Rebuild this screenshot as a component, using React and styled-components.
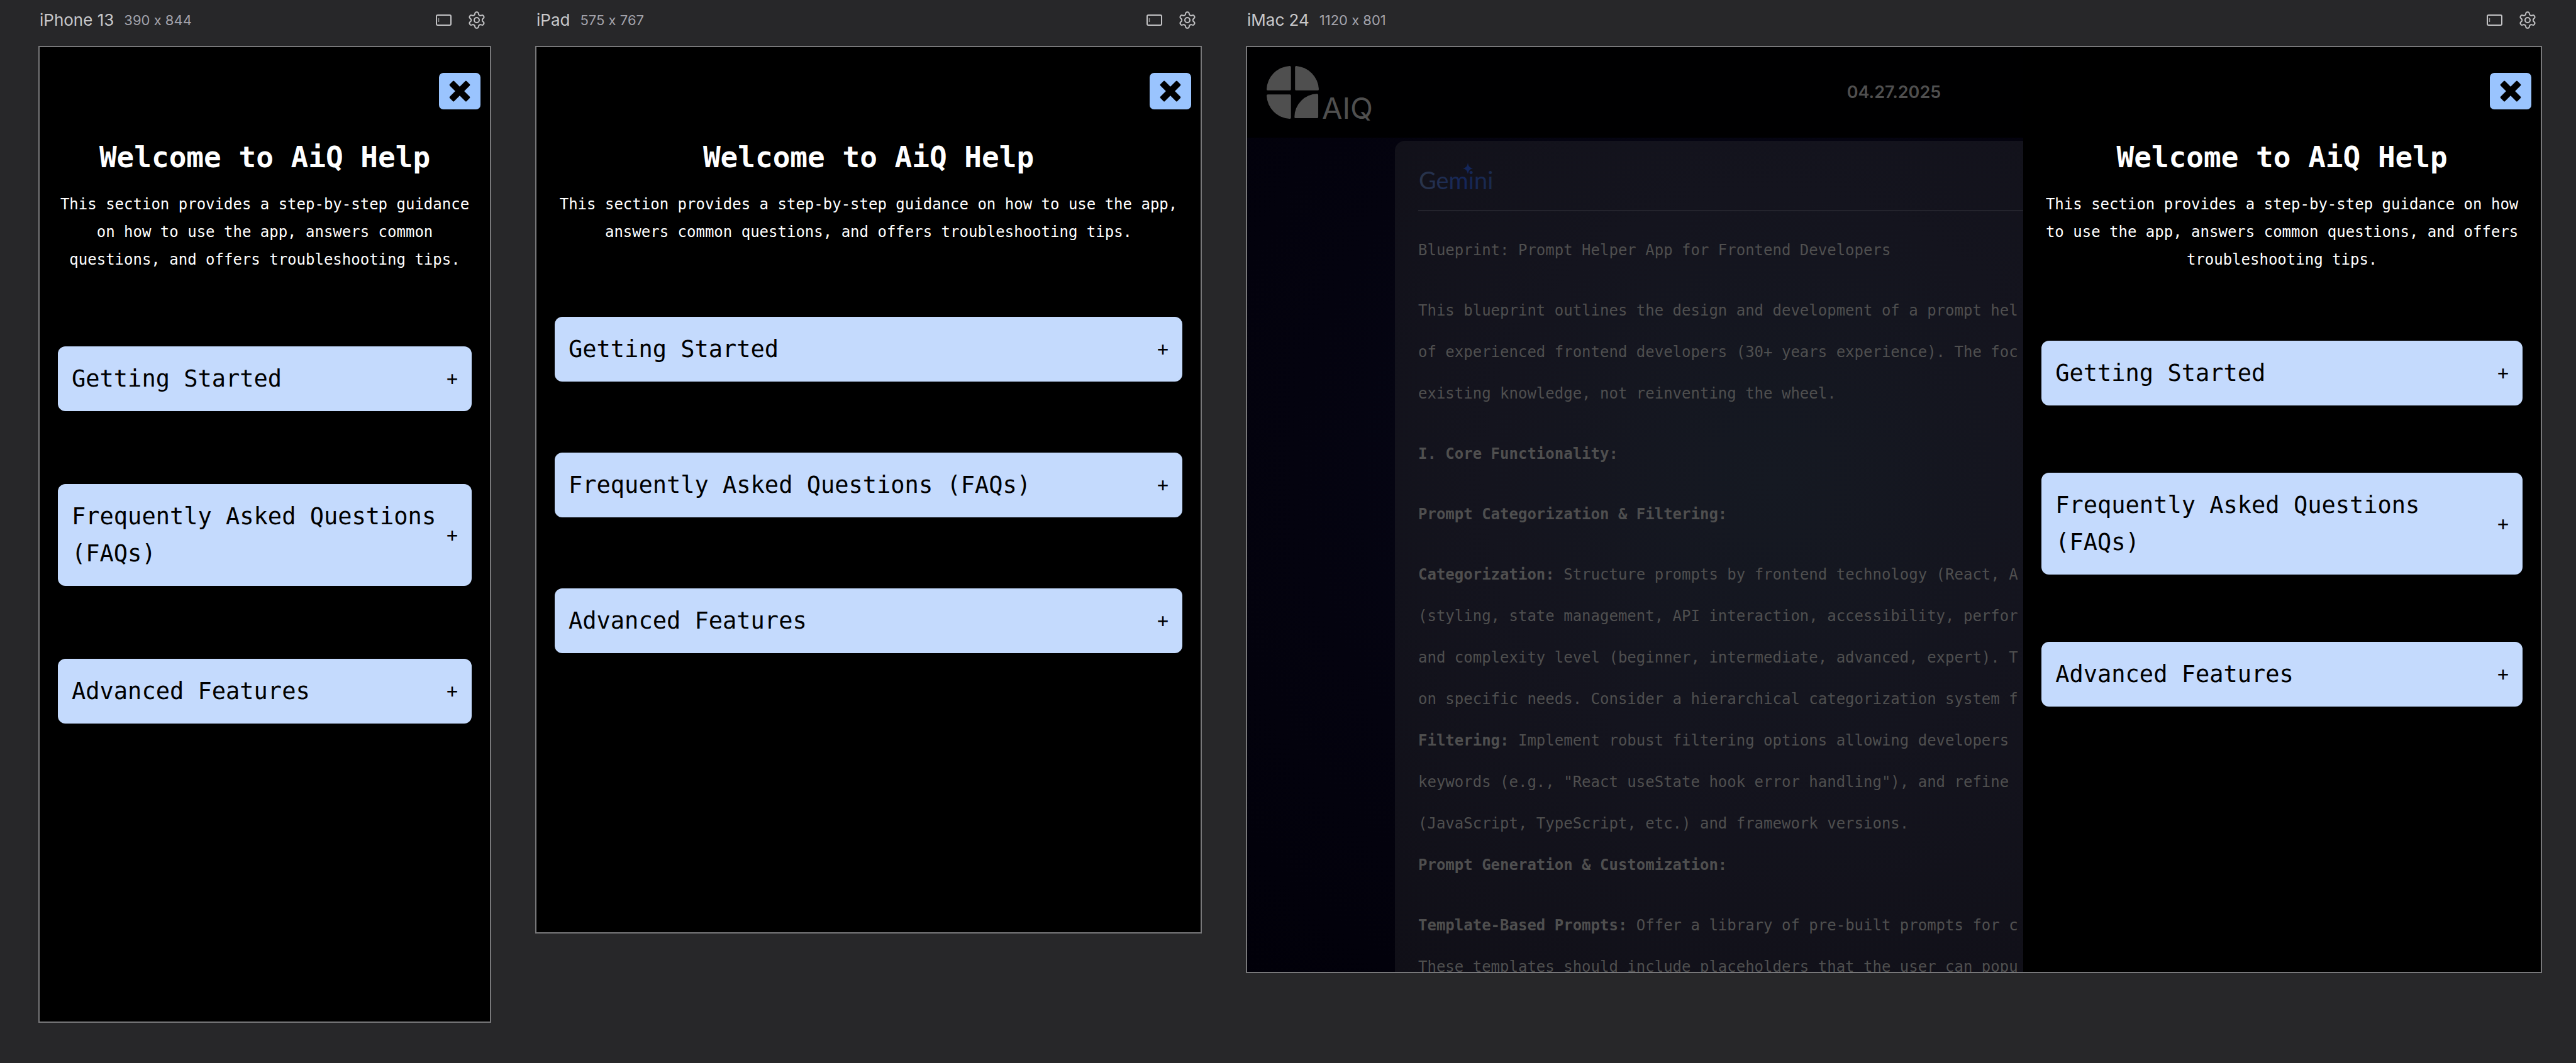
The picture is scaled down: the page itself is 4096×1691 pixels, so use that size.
import React from "react";
import styled, { createGlobalStyle } from "styled-components";

const mono = `"DejaVu Sans Mono", "Liberation Mono", monospace`;
const sans = `Inter, "Liberation Sans", sans-serif`;

const GlobalStyle = createGlobalStyle`
  *, *::before, *::after { box-sizing: border-box; }
  body { margin: 0; background: #272729; font-family: ${sans}; }
  h1, h2, h3, p { margin: 0; }
  button { font: inherit; cursor: pointer; }
`;

const Workspace = styled.main`
  display: grid;
  grid-template-columns: 720fr 1060fr 2061fr;
  align-items: start;
  gap: 70px;
  padding: 0 54px 60px 61px;
  min-height: 100vh;
  background: #272729;
`;

const Device = styled.section`
  min-width: 0;
`;

const DeviceBar = styled.header`
  display: flex;
  align-items: center;
  gap: 16px;
  height: 73px;
  padding: 0 9px 10px 2px;
`;

const DeviceName = styled.h2`
  font-size: 26px;
  font-weight: 400;
  line-height: 32px;
  color: #c8c8ca;
`;

const DeviceSize = styled.span`
  font-size: 22px;
  line-height: 32px;
  font-feature-settings: "calt" 0;
  color: #a3a3ab;
`;

const DeviceTools = styled.div`
  display: flex;
  align-items: center;
  gap: 26px;
  margin-left: auto;
`;

const ToolButton = styled.button`
  display: flex;
  padding: 0;
  border: 0;
  background: none;
  color: #c2c2c4;
`;

const Screen = styled.div`
  display: flex;
  width: 100%;
  aspect-ratio: ${(p) => p.$ratio};
  overflow: hidden;
  border: 2px solid #78787a;
  background: #000;
`;

const HelpPanel = styled.aside`
  flex: 0 0 ${(p) => p.$width};
  padding: 41px 15px 0;
  background: #000;
  color: #fff;
  font-family: ${mono};
`;

const CloseButton = styled.button`
  display: flex;
  align-items: center;
  justify-content: center;
  width: 66px;
  height: 58px;
  margin-left: auto;
  padding: 0;
  border: 0;
  border-radius: 7px;
  background: #9ac4fe;
  color: #000;
`;

const PanelBody = styled.div`
  display: flex;
  flex-direction: column;
  padding: 38px 14px 0;
`;

const Title = styled.h1`
  font-size: 46px;
  font-weight: 700;
  line-height: 76px;
  text-align: center;
`;

const Intro = styled.p`
  margin-top: 15px;
  font-size: 24px;
  line-height: 44px;
  text-align: center;
`;

const Topics = styled.div`
  display: flex;
  flex-direction: column;
  gap: ${(p) => p.$gap}px;
  margin-top: ${(p) => p.$gap}px;
`;

const Topic = styled.button`
  display: flex;
  align-items: center;
  justify-content: space-between;
  width: 100%;
  padding: 22px;
  border: 0;
  border-radius: 12px;
  background: #c4dafd;
  color: #000;
  text-align: left;
`;

const TopicName = styled.span`
  font-size: 37px;
  line-height: 59px;
`;

const TopicMark = styled.span`
  font-size: 30px;
  line-height: 59px;
`;

const AppView = styled.div`
  flex: 1;
  min-width: 0;
  display: flex;
  flex-direction: column;
  overflow: hidden;
  background: radial-gradient(circle at 60% 45%, #080a1c 0%, #04030f 60%, #010009 100%);
`;

const AppHeader = styled.header`
  display: flex;
  align-items: center;
  justify-content: space-between;
  flex: 0 0 144px;
  padding: 0 131px 0 31px;
  background: #000001;
  color: #4f4f4f;
`;

const Brand = styled.div`
  display: flex;
  align-items: flex-end;
  gap: 5px;
`;

const BrandName = styled.span`
  font-size: 47px;
  line-height: 34px;
`;

const Today = styled.time`
  font-size: 27px;
  font-weight: 600;
  line-height: 32px;
`;

const Answer = styled.article`
  flex: 1;
  margin: 5px 0 0 235px;
  padding: 0 0 0 37px;
  border-top-left-radius: 16px;
  background: radial-gradient(circle at 60% 40%, #151922 0%, #14141e 45%, #100f17 100%);
  color: #4f4f4f;
  font-family: ${mono};
  font-size: 24px;
  line-height: 66px;
  white-space: nowrap;
`;

const AnswerHead = styled.div`
  height: 112px;
  padding-top: 32px;
  border-bottom: 2px solid #24242d;
`;

const AnswerBody = styled.div`
  display: flex;
  flex-direction: column;
  gap: 30px;
  padding-top: 29px;
`;

const Line = styled.span`
  display: block;
`;

const PanelIcon = () => (
  <svg width="25" height="18" viewBox="0 0 25 18" fill="none" stroke="currentColor" strokeWidth="2" aria-hidden="true">
    <rect x="1" y="1" width="23" height="16" rx="2" />
    <path d="M4.500 6v6" strokeWidth="1.500" opacity="0.7" />
  </svg>
);

// Six rounded teeth, the first one pointing straight up.
const gearOutline = Array.from({ length: 120 }, (_, i) => {
  const angle = (i / 120) * Math.PI * 2;
  const radius = 10.8 + 2 * Math.tanh(1.8 * Math.cos(angle * 6));
  return `${(14 + radius * Math.sin(angle)).toFixed(2)},${(14 - radius * Math.cos(angle)).toFixed(2)}`;
}).join(" ");

const GearIcon = () => (
  <svg width="28" height="28" viewBox="0 0 28 28" fill="none" stroke="currentColor" strokeWidth="2" strokeLinejoin="round" aria-hidden="true">
    <circle cx="14" cy="14" r="4" />
    <polygon points={gearOutline} />
  </svg>
);

const CrossIcon = () => (
  <svg width="34" height="34" viewBox="0 0 34 34" fill="currentColor" aria-hidden="true">
    <rect x="-2" y="12" width="38" height="10" rx="1.500" transform="rotate(45 17 17)" />
    <rect x="-2" y="12" width="38" height="10" rx="1.500" transform="rotate(-45 17 17)" />
  </svg>
);

const LogoMark = () => (
  <svg width="83" height="84" viewBox="0 0 90 91" fill="currentColor" aria-hidden="true">
    <path d="M42 2v38q0 2-2 2H2q-2 0-2-2A42 42 0 0 1 40 0q2 0 2 2z" />
    <path d="M49 2v38q0 2 2 2h37q2 0 2-2A42 42 0 0 0 51 0q-2 0-2 2z" />
    <path d="M42 51v38q0 2-2 2A42 42 0 0 1 0 51q0-2 2-2h38q2 0 2 2z" />
    <path d="M89 50v38q0 2-2 2H50q-2 0-2-2A40 40 0 0 1 87 48q2 0 2 2z" />
  </svg>
);

const GeminiLogo = () => (
  <svg width="130" height="60" viewBox="0 0 130 60" role="img" aria-label="Gemini">
    <defs>
      <linearGradient id="gem" x1="0" x2="1">
        <stop offset="0" stopColor="#2b3549" />
        <stop offset="0.6" stopColor="#14265a" />
        <stop offset="1" stopColor="#1b2a4d" />
      </linearGradient>
    </defs>
    <text x="1" y="45" fontFamily="Lato, sans-serif" fontSize="38" fill="url(#gem)">Gemini</text>
    <path d="M79 3q1 8 8 9q-7 1-8 9q-1-8-8-9q7-1 8-9z" fill="#14265a" />
  </svg>
);

const topics = ["Getting Started", "Frequently Asked Questions (FAQs)", "Advanced Features"];

function Help({ width = "100%", gap }) {
  return (
    <HelpPanel $width={width}>
      <CloseButton type="button" aria-label="Close help"><CrossIcon /></CloseButton>
      <PanelBody>
        <Title>Welcome to AiQ Help</Title>
        <Intro>
          This section provides a step-by-step guidance on how to use the app, answers common
          questions, and offers troubleshooting tips.
        </Intro>
        <Topics $gap={gap}>
          {topics.map((name) => (
            <Topic type="button" key={name} aria-expanded="false">
              <TopicName>{name}</TopicName>
              <TopicMark>+</TopicMark>
            </Topic>
          ))}
        </Topics>
      </PanelBody>
    </HelpPanel>
  );
}

const answer = [
  [["", "Blueprint: Prompt Helper App for Frontend Developers"]],
  [
    ["", "This blueprint outlines the design and development of a prompt hel"],
    ["", "of experienced frontend developers (30+ years experience). The foc"],
    ["", "existing knowledge, not reinventing the wheel."],
  ],
  [["I. Core Functionality:", ""]],
  [["Prompt Categorization & Filtering:", ""]],
  [
    ["Categorization:", " Structure prompts by frontend technology (React, A"],
    ["", "(styling, state management, API interaction, accessibility, perfor"],
    ["", "and complexity level (beginner, intermediate, advanced, expert). T"],
    ["", "on specific needs. Consider a hierarchical categorization system f"],
    ["Filtering:", " Implement robust filtering options allowing developers"],
    ["", "keywords (e.g., \"React useState hook error handling\"), and refine"],
    ["", "(JavaScript, TypeScript, etc.) and framework versions."],
    ["Prompt Generation & Customization:", ""],
  ],
  [
    ["Template-Based Prompts:", " Offer a library of pre-built prompts for c"],
    ["", "These templates should include placeholders that the user can popu"],
  ],
];

function DeviceFrame({ name, size, ratio, children }) {
  return (
    <Device>
      <DeviceBar>
        <DeviceName>{name}</DeviceName>
        <DeviceSize>{size}</DeviceSize>
        <DeviceTools>
          <ToolButton type="button" aria-label="Rotate"><PanelIcon /></ToolButton>
          <ToolButton type="button" aria-label="Settings"><GearIcon /></ToolButton>
        </DeviceTools>
      </DeviceBar>
      <Screen $ratio={ratio}>{children}</Screen>
    </Device>
  );
}

export default function App() {
  return (
    <>
      <GlobalStyle />
      <Workspace>
        <DeviceFrame name="iPhone 13" size="390 x 844" ratio="720 / 1554">
          <Help gap={116} />
        </DeviceFrame>
        <DeviceFrame name="iPad" size="575 x 767" ratio="1060 / 1412">
          <Help gap={113} />
        </DeviceFrame>
        <DeviceFrame name="iMac 24" size="1120 x 801" ratio="2061 / 1475">
          <AppView>
            <AppHeader>
              <Brand><LogoMark /><BrandName>AIQ</BrandName></Brand>
              <Today dateTime="2025-04-27">04.27.2025</Today>
            </AppHeader>
            <Answer>
              <AnswerHead><GeminiLogo /></AnswerHead>
              <AnswerBody>
                {answer.map((lines, i) => (
                  <p key={i}>
                    {lines.map(([strong, text]) => (
                      <Line key={strong + text}>{strong && <strong>{strong}</strong>}{text}</Line>
                    ))}
                  </p>
                ))}
              </AnswerBody>
            </Answer>
          </AppView>
          <Help width="40%" gap={107} />
        </DeviceFrame>
      </Workspace>
    </>
  );
}
